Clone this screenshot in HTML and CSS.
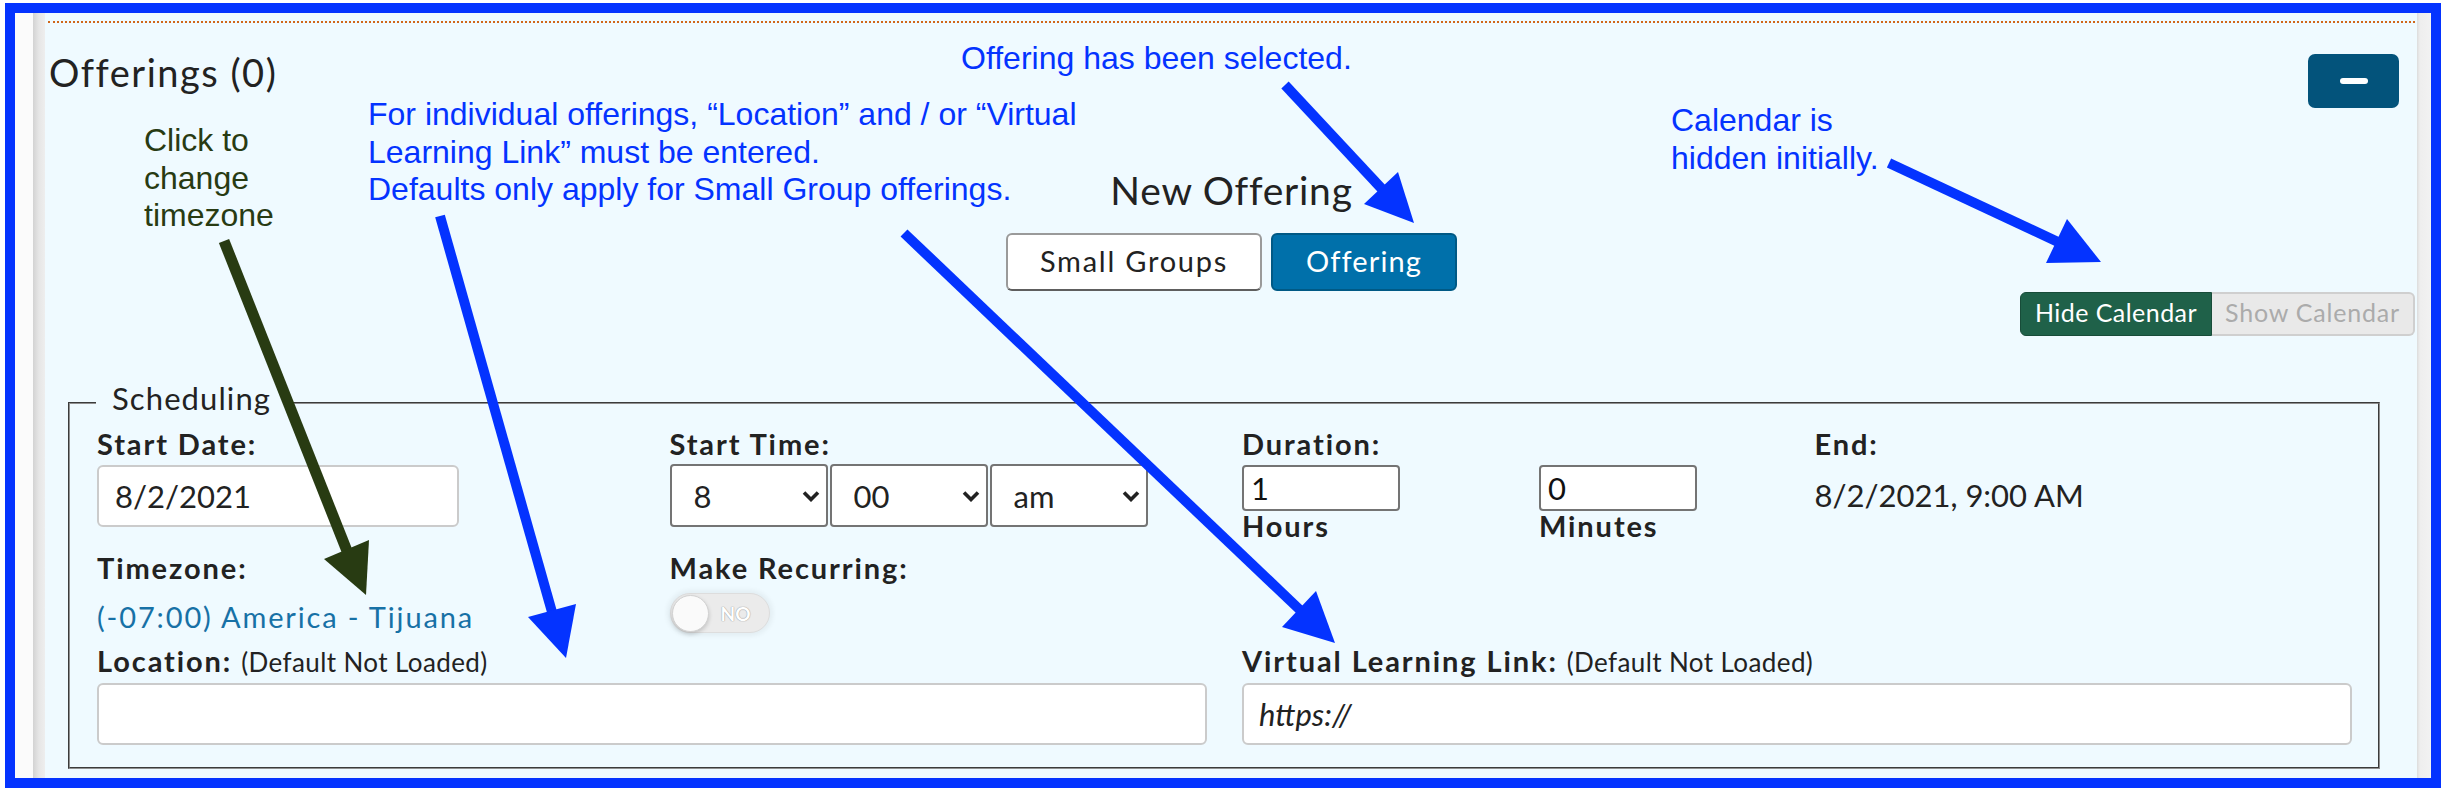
FILE: index.html
```html
<!DOCTYPE html>
<html lang="en">
<head>
<meta charset="utf-8">
<title>Offerings</title>
<link rel="stylesheet" href="styles.css">
</head>
<body>
<div class="frame">
  <div class="card">
    <div class="panel">
      <div class="panel-body">
        <div class="head-row">
          <h2 class="title">Offerings (0)</h2>
          <button class="btn-collapse" type="button"><span class="minus"></span></button>
        </div>
        <div class="new-offering">
          <h3 class="new-off-h">New Offering</h3>
          <div class="seg">
            <button class="seg-btn seg-light" type="button"><span class="sg">Small Groups</span></button>
            <button class="seg-btn seg-active" type="button"><span class="ob">Offering</span></button>
          </div>
        </div>
        <div class="cal-row">
          <div class="cal-toggle">
            <span class="cal-on">Hide Calendar</span>
            <span class="cal-off"><span class="show-t">Show Calendar</span></span>
          </div>
        </div>
        <fieldset class="sched">
          <legend>Scheduling</legend>
          <div class="grid">
            <div class="col">
              <label class="lbl">Start Date:</label>
              <input class="date-input" type="text" value="8/2/2021">
              <div class="lbl gap-lbl">Timezone:</div>
              <a class="tz-link">(-07:00) America - Tijuana</a>
            </div>
            <div class="col">
              <label class="lbl">Start Time:</label>
              <div class="selects">
                <div class="sel-wrap">
                  <select class="sel"><option>8</option></select>
                  <svg class="chev" width="18" height="12" viewBox="0 0 18 12"><path d="M2 2.5l7 7 7-7" fill="none" stroke="#222" stroke-width="3.6"/></svg>
                </div>
                <div class="sel-wrap">
                  <select class="sel"><option>00</option></select>
                  <svg class="chev" width="18" height="12" viewBox="0 0 18 12"><path d="M2 2.5l7 7 7-7" fill="none" stroke="#222" stroke-width="3.6"/></svg>
                </div>
                <div class="sel-wrap">
                  <select class="sel"><option>am</option></select>
                  <svg class="chev" width="18" height="12" viewBox="0 0 18 12"><path d="M2 2.5l7 7 7-7" fill="none" stroke="#222" stroke-width="3.6"/></svg>
                </div>
              </div>
              <div class="lbl gap-lbl">Make Recurring:</div>
              <div class="switch"><span class="knob"></span><span class="sw-text">NO</span></div>
            </div>
            <div class="col">
              <label class="lbl">Duration:</label>
              <div class="dur-grid">
                <div class="dur-item">
                  <input class="dur-input" type="text" value="1">
                  <span class="dur-lbl">Hours</span>
                </div>
                <div class="dur-item">
                  <input class="dur-input" type="text" value="0">
                  <span class="dur-lbl">Minutes</span>
                </div>
              </div>
            </div>
            <div class="col">
              <label class="lbl">End:</label>
              <div class="end-val">8/2/2021, 9:00 AM</div>
            </div>
            <div class="col span2">
              <label class="lbl"><span>Location:</span> <span class="dnl">(Default Not Loaded)</span></label>
              <input class="wide-input" type="text" value="">
            </div>
            <div class="col span2">
              <label class="lbl"><span>Virtual Learning Link:</span> <span class="dnl">(Default Not Loaded)</span></label>
              <input class="wide-input link-input" type="text" value="https://">
            </div>
          </div>
        </fieldset>
      </div>
    </div>
  </div>
</div>

<div class="notes">
  <div class="note note-offsel">Offering has been selected.</div>
  <div class="note note-tz">Click to<br>change<br>timezone</div>
  <div class="note note-for">For individual offerings, “Location” and / or “Virtual<br>Learning Link” must be entered.<br>Defaults only apply for Small Group offerings.</div>
  <div class="note note-cal">Calendar is<br>hidden initially.</div>
  <svg class="arrows" width="2446" height="790" viewBox="0 0 2446 790">
    <g stroke="#283b12" fill="#283b12">
      <line x1="224" y1="241" x2="347" y2="551" stroke-width="11"/>
      <polygon points="324,559 369,540 366,595" stroke="none"/>
    </g>
    <g stroke="#0433ff" fill="#0433ff">
      <line x1="440" y1="216" x2="552" y2="612" stroke-width="10"/>
      <polygon points="528,617 576,604 566,658" stroke="none"/>
      <line x1="904" y1="233" x2="1300" y2="610" stroke-width="10"/>
      <polygon points="1282,627 1316,591 1335,643" stroke="none"/>
      <line x1="1285" y1="85" x2="1382" y2="189" stroke-width="10"/>
      <polygon points="1364,204 1398,172 1414,223" stroke="none"/>
      <line x1="1889" y1="163" x2="2058" y2="242" stroke-width="10"/>
      <polygon points="2046,263 2067,219 2101,262" stroke="none"/>
    </g>
  </svg>
</div>
</body>
</html>
```

FILE: styles.css
```css
* { box-sizing: border-box; }
html, body { margin: 0; padding: 0; }
body {
  width: 2446px;
  height: 790px;
  background: #ffffff;
  font-family: Lato, "Noto Sans", sans-serif;
  color: #222222;
  position: relative;
  overflow: hidden;
}

.frame {
  margin: 3px 5px 0 5px;
  height: 785px;
  border: 10px solid #0433ff;
  background: #fbfbfb;
  padding-left: 18px;
  display: flex;
  overflow: hidden;
}
.card {
  flex: 1;
  display: flex;
  padding: 0 14px 0 12px;
  background:
    linear-gradient(to right, #d3d3d3 0, #e6e6e6 6px, #eeeeee 12px, transparent 12px),
    linear-gradient(to right, transparent calc(100% - 14px), #dcdcdc calc(100% - 14px), #eeeeee calc(100% - 11px), #f2f2f2 100%);
}
.panel {
  flex: 1;
  background: #effaff;
  padding: 8px 2px 0 3px;
}
.panel-body {
  border-top: 2px dotted #d0671a;
}

/* header */
.head-row {
  display: flex;
  justify-content: space-between;
  align-items: flex-start;
  padding: 26px 16px 0 1px;
}
.title {
  margin: 0;
  font-size: 38px;
  font-weight: 400;
  line-height: 46px;
  letter-spacing: 1.5px;
  color: #222;
}
.btn-collapse {
  margin-top: 5px;
  width: 91px;
  height: 54px;
  background: #03537b;
  border: none;
  border-radius: 7px;
  padding: 0;
  display: flex;
  align-items: center;
  justify-content: center;
}
.minus {
  width: 28px;
  height: 6px;
  background: #ffffff;
  border-radius: 3px;
}

/* new offering */
.new-offering {
  display: flex;
  flex-direction: column;
  align-items: center;
  margin-top: 58px;
}
.new-off-h {
  margin: 0;
  font-size: 39px;
  line-height: 48px;
  font-weight: 400;
  letter-spacing: 0.75px;
  color: #222;
}
.seg {
  display: flex;
  gap: 9px;
  margin-top: 19px;
}
.seg-btn {
  height: 58px;
  font-family: Lato, "Noto Sans", sans-serif;
  font-size: 29px;
  border-radius: 6px;
  padding: 0 0 4px;
  display: flex;
  align-items: center;
  justify-content: center;
}
.seg-light {
  width: 256px;
  background: #ffffff;
  color: #222;
  border: 2px solid #9a9a9a;
  border-bottom-color: #5e5e5e;
  letter-spacing: 1.75px;
}
.seg-active {
  width: 186px;
  background: #0070aa;
  color: #ffffff;
  border: 2px solid #005985;
  letter-spacing: 1.1px;
}

/* calendar toggle */
.cal-row {
  display: flex;
  justify-content: flex-end;
  margin-top: 1px;
}
.cal-toggle {
  display: flex;
  height: 44px;
}
.cal-on {
  width: 192px;
  background: #1f6149;
  color: #ffffff;
  border: 1px solid #184c39;
  border-radius: 6px 0 0 6px;
  font-size: 25px;
  letter-spacing: 0.45px;
  padding-bottom: 4px;
  display: flex;
  align-items: center;
  justify-content: center;
}
.cal-off {
  width: 203px;
  background: #e9e9e9;
  color: #ababab;
  border: 2px solid #cfcfcf;
  border-left: none;
  border-radius: 0 6px 6px 0;
  font-size: 25px;
  letter-spacing: 0.8px;
  padding-bottom: 4px;
  display: flex;
  align-items: center;
  justify-content: center;
}

/* fieldset */
.sched {
  margin: 44px 0 0 20px;
  width: 2312px;
  border: 2px groove #8f8f8f;
  padding: 1px 26px 22px 27px;
  min-width: 0;
}
.sched legend {
  margin-left: -1px;
  padding: 0 19px 9px 16px;
  font-size: 31px;
  line-height: 36px;
  letter-spacing: 1.1px;
  color: #222;
}
.grid {
  display: grid;
  grid-template-columns: repeat(4, 1fr);
  column-gap: 35px;
  row-gap: 9px;
}
.col {
  display: flex;
  flex-direction: column;
  align-items: flex-start;
}
.span2 { grid-column: span 2; align-items: stretch; }
.lbl {
  display: block;
  font-weight: 700;
  font-size: 29px;
  line-height: 35px;
  letter-spacing: 1.9px;
  color: #222;
}
.gap-lbl { margin-top: 23px; }
.dnl {
  font-weight: 400;
  font-size: 26px;
  letter-spacing: 0.4px;
}

.date-input {
  margin-top: 4px;
  width: 362px;
  height: 62px;
  border: 2px solid #cbcbcb;
  border-radius: 6px;
  background: #ffffff;
  padding: 0 16px;
  font-family: Lato, "Noto Sans", sans-serif;
  font-size: 31px;
  color: #222;
}
.tz-link {
  display: block;
  margin-top: 14px;
  font-size: 29px;
  line-height: 35px;
  letter-spacing: 1.86px;
  color: #1771a6;
}

.selects {
  display: flex;
  gap: 2px;
  margin-top: 3px;
}
.sel-wrap {
  display: grid;
}
.sel {
  grid-area: 1 / 1;
  appearance: none;
  -webkit-appearance: none;
  width: 158px;
  height: 63px;
  border: 2px solid #747474;
  border-radius: 4px;
  background: #ffffff;
  padding: 0 0 0 22px;
  font-family: Lato, "Noto Sans", sans-serif;
  font-size: 31px;
  color: #222;
}
.chev {
  grid-area: 1 / 1;
  justify-self: end;
  align-self: center;
  margin-right: 8px;
  pointer-events: none;
}

.switch {
  margin-top: 8px;
  width: 100px;
  height: 40px;
  border-radius: 20px;
  background: #ebebeb;
  border: 1px solid #dddddd;
  box-shadow: 0 0 5px 3px rgba(0, 0, 0, 0.05);
  display: flex;
  align-items: center;
  padding: 0 1px;
}
.knob {
  width: 37px;
  height: 37px;
  border-radius: 50%;
  background: #fafafa;
  border: 1px solid #d2d2d2;
  box-shadow: 0 2px 4px rgba(0, 0, 0, 0.18);
}
.sw-text {
  margin-left: 12px;
  font-size: 19px;
  font-weight: 700;
  color: #ffffff;
  text-shadow: 0 0 1px #9a9a9a, 0 0 1px #9a9a9a;
}

.dur-grid {
  display: grid;
  grid-template-columns: 297px 1fr;
  margin-top: 4px;
  width: 100%;
}
.dur-item {
  display: flex;
  flex-direction: column;
  align-items: flex-start;
}
.dur-input {
  width: 158px;
  height: 46px;
  border: 2px solid #747474;
  border-radius: 4px;
  background: #ffffff;
  padding: 0 7px;
  font-family: Lato, "Noto Sans", sans-serif;
  font-size: 31px;
  color: #111;
}
.dur-lbl {
  font-weight: 700;
  font-size: 29px;
  line-height: 29px;
  letter-spacing: 1.9px;
}

.end-val {
  margin-top: 14px;
  font-size: 31px;
  line-height: 40px;
}

.wide-input {
  margin-top: 3px;
  width: 100%;
  height: 62px;
  border: 2px solid #cbcbcb;
  border-radius: 6px;
  background: #ffffff;
  padding: 0 15px;
  font-family: Lato, "Noto Sans", sans-serif;
  font-size: 31px;
  color: #222;
}
.link-input { font-style: italic; }

/* annotations */
.notes {
  position: absolute;
  left: 0;
  top: 0;
  width: 2446px;
  height: 790px;
  pointer-events: none;
}
.note {
  position: absolute;
  font-family: "Liberation Sans", Arial, sans-serif;
  font-size: 32px;
  line-height: 37.5px;
  color: #0433ff;
  white-space: nowrap;
}
.note-offsel { left: 961px; top: 40px; }
.note-tz { left: 144px; top: 122px; color: #283b12; }
.note-for { left: 368px; top: 96px; }
.note-cal { left: 1671px; top: 101px; line-height: 38.3px; }
.arrows {
  position: absolute;
  left: 0;
  top: 0;
}
```
